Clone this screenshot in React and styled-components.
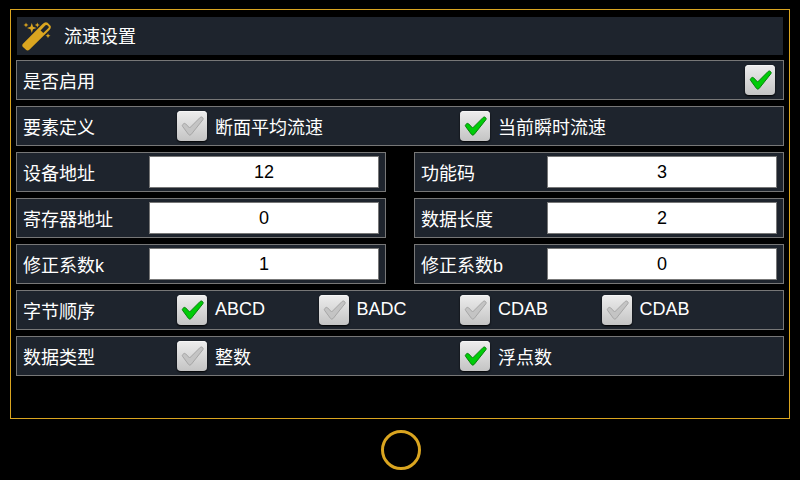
import React, { useState } from 'react';
import styled, { createGlobalStyle } from 'styled-components';

const GlobalStyle = createGlobalStyle`
  * {
    box-sizing: border-box;
  }

  body {
    margin: 0;
    background: #000;
    color: #fff;
    font-family: "Liberation Sans", "Noto Sans CJK SC", sans-serif;
    font-size: 18px;
    line-height: 24px;
  }
`;

const Page = styled.main`
  padding: 9px 10px 0;
`;

const Panel = styled.section`
  display: flex;
  flex-direction: column;
  gap: 6px;
  padding: 7px 5px 42px;
  border: 1px solid #daa520;
`;

const TitleBar = styled.header`
  display: flex;
  align-items: center;
  gap: 12px;
  height: 38px;
  margin: 0 1px -1px;
  padding: 0 5px;
  background: #1e242d;
`;

const Title = styled.h1`
  margin: 0;
  padding-top: 2px;
  font-size: 18px;
  font-weight: 400;
  line-height: 24px;
`;

const Row = styled.div`
  display: flex;
  align-items: center;
  justify-content: space-between;
  height: 40px;
  padding: 0 8px 0 6px;
  border: 1px solid #777;
  background: #1e242d;
`;

const FieldRow = styled(Row)`
  display: grid;
  grid-template-columns: 126px 1fr;
  padding-right: 6px;
`;

const GroupRow = styled(Row)`
  display: grid;
  grid-template-columns: 154px 1fr;
  padding-right: 40px;
`;

// Chinese glyphs sit high in the line box, so they get some room above
const RowLabel = styled.label`
  padding-top: 4px;
`;

const Options = styled.div`
  display: grid;
  grid-template-columns: repeat(${(props) => props.$columns}, 1fr);
`;

const Columns = styled.div`
  display: grid;
  grid-template-columns: 1fr 1fr;
  gap: 6px 28px;
`;

const OptionLabel = styled.label`
  display: flex;
  align-items: center;
  gap: 8px;
  cursor: pointer;
`;

const OptionText = styled.span`
  padding: ${(props) => (props.$latin ? '0 0 2px' : '4px 0 0')};
`;

const TextInput = styled.input`
  width: 100%;
  height: 32px;
  padding: 0 4px;
  border: 1px solid #777;
  border-radius: 0;
  background: #fff;
  color: #000;
  font-family: inherit;
  font-size: 18px;
  text-align: center;

  &:focus {
    outline: 1px solid #daa520;
  }
`;

const CheckFrame = styled.span`
  display: grid;
  width: 30px;
  height: 30px;

  > * {
    grid-area: 1 / 1;
  }
`;

const Checkbox = styled.input`
  appearance: none;
  width: 30px;
  height: 30px;
  margin: 0;
  border-radius: 4px;
  background: linear-gradient(#ededed, #c4c4c4);
  box-shadow: 0 1px 2px #000, inset 0 1px 0 #f6f6f6;
  cursor: pointer;
`;

const CheckMark = styled.svg`
  width: 30px;
  height: 30px;
  pointer-events: none;
`;

const Footer = styled.footer`
  display: flex;
  justify-content: center;
  padding: 11px 0 0 2px;
`;

const HomeButton = styled.button`
  width: 40px;
  height: 40px;
  padding: 0;
  border: 3px solid #daa520;
  border-radius: 50%;
  background: transparent;
  cursor: pointer;
`;

const WandIcon = () => (
  <svg width="30" height="30" viewBox="0 0 30 30" fill="#daa520" aria-hidden="true">
    <path
      fillRule="evenodd"
      d="M1 22.8 20.6 3Q23.5 0 25.6 1.8L28 4.2Q30 6 27.4 9L7.6 28.6Q5.5 30.4 3.7 28.6L1.2 26.2Q-.6 24.6 1 22.8ZM18.6 9.6 21.3 12 26.4 7.1Q27.3 6 26 4.7 24.6 3.4 23.5 4.3L19 8.9Q18.5 9.3 18.6 9.6Z"
    />
    <path d="M9.8 2 11 5.7 14.5 7 11 8.2 9.8 12 8.5 8.2 5 7 8.5 5.7Z" />
    <path d="M4 1.5 4.7 3.3 6.5 4 4.7 4.7 4 6.5 3.3 4.7 1.5 4 3.3 3.3Z" />
    <path d="M15.3 1.5 16 3.3 17.8 4 16 4.7 15.3 6.5 14.6 4.7 12.8 4 14.6 3.3Z" />
    <path d="M26 12.3 26.7 14.1 28.5 14.8 26.7 15.5 26 17.3 25.3 15.5 23.5 14.8 25.3 14.1Z" />
  </svg>
);

const Check = ({ id, checked, onChange }) => (
  <CheckFrame>
    <Checkbox id={id} type="checkbox" checked={checked} onChange={onChange} />
    <CheckMark viewBox="0 0 30 30" aria-hidden="true">
      <path
        d="M5.6 15.4Q4.9 14.4 5.8 13.5L6.7 12.7Q7.7 12 8.6 12.8L12.6 17 23.2 6.4Q24.2 5.6 25.1 6.2L25.9 7Q26.5 7.8 25.9 8.7L14.2 23.4Q12.8 25 11.5 23.4Z"
        fill={checked ? '#00cc08' : '#c4c4c4'}
        stroke={checked ? '#0a7f0e' : '#a6a6a6'}
        strokeWidth="1"
      />
    </CheckMark>
  </CheckFrame>
);

const CheckGroup = ({ title, name, columns, latin, options, values, onToggle }) => (
  <GroupRow role="group" aria-labelledby={`${name}-title`}>
    <RowLabel as="span" id={`${name}-title`}>{title}</RowLabel>
    <Options $columns={columns}>
      {options.map((option, index) => (
        <OptionLabel key={`${name}-${index}`} htmlFor={`${name}-${index}`}>
          <Check
            id={`${name}-${index}`}
            checked={values[index]}
            onChange={() => onToggle(name, index)}
          />
          <OptionText $latin={latin}>{option}</OptionText>
        </OptionLabel>
      ))}
    </Options>
  </GroupRow>
);

const fields = [
  { name: 'deviceAddress', label: '设备地址' },
  { name: 'functionCode', label: '功能码' },
  { name: 'registerAddress', label: '寄存器地址' },
  { name: 'dataLength', label: '数据长度' },
  { name: 'factorK', label: '修正系数k' },
  { name: 'factorB', label: '修正系数b' }
];

const App = () => {
  const [enabled, setEnabled] = useState(true);
  const [formData, setFormData] = useState({
    deviceAddress: '12',
    functionCode: '3',
    registerAddress: '0',
    dataLength: '2',
    factorK: '1',
    factorB: '0'
  });
  const [checks, setChecks] = useState({
    element: [false, true],
    byteOrder: [true, false, false, false],
    dataType: [false, true]
  });

  const handleInputChange = (e) => {
    const { name, value } = e.target;
    setFormData((prev) => ({ ...prev, [name]: value }));
  };

  // Only one option per group can be active
  const handleToggle = (name, index) => {
    setChecks((prev) => ({
      ...prev,
      [name]: prev[name].map((_, i) => i === index)
    }));
  };

  return (
    <>
      <GlobalStyle />
      <Page>
        <Panel>
          <TitleBar>
            <WandIcon />
            <Title>流速设置</Title>
          </TitleBar>

          <Row>
            <RowLabel htmlFor="enabled">是否启用</RowLabel>
            <Check id="enabled" checked={enabled} onChange={() => setEnabled(!enabled)} />
          </Row>

          <CheckGroup
            title="要素定义"
            name="element"
            columns={2}
            options={['断面平均流速', '当前瞬时流速']}
            values={checks.element}
            onToggle={handleToggle}
          />

          <Columns>
            {fields.map((field) => (
              <FieldRow key={field.name}>
                <RowLabel htmlFor={field.name}>{field.label}</RowLabel>
                <TextInput
                  id={field.name}
                  type="text"
                  name={field.name}
                  value={formData[field.name]}
                  onChange={handleInputChange}
                />
              </FieldRow>
            ))}
          </Columns>

          <CheckGroup
            title="字节顺序"
            name="byteOrder"
            columns={4}
            latin
            options={['ABCD', 'BADC', 'CDAB', 'CDAB']}
            values={checks.byteOrder}
            onToggle={handleToggle}
          />

          <CheckGroup
            title="数据类型"
            name="dataType"
            columns={2}
            options={['整数', '浮点数']}
            values={checks.dataType}
            onToggle={handleToggle}
          />
        </Panel>

        <Footer>
          <HomeButton type="button" aria-label="返回" />
        </Footer>
      </Page>
    </>
  );
};

export default App;
